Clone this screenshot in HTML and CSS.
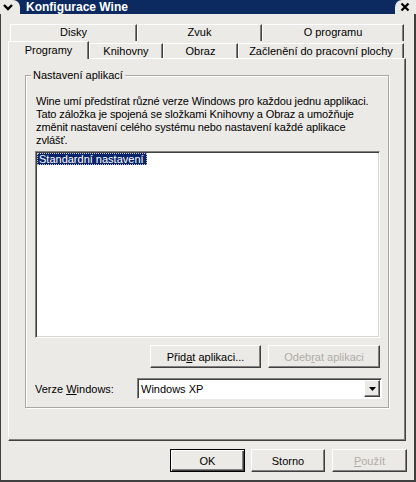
FILE: index.html
```html
<!DOCTYPE html>
<html lang="cs">
<head>
  <meta charset="UTF-8" />
  <title>Konfigurace Wine</title>
  <link rel="stylesheet" href="styles.css">
</head>
<body>

  <div class="titlebar">
    <div class="sysmenu">
      <svg width="12" height="8" viewBox="0 0 12 8"><polyline points="2,2 6,6 10,2" fill="none" stroke="#000" stroke-width="2.4"/></svg>
    </div>
    <div class="title">Konfigurace Wine</div>
    <div class="close">
      <svg width="10" height="10" viewBox="0 0 10 10"><path d="M1.5 1.5 L8.5 8.5 M8.5 1.5 L1.5 8.5" stroke="#000" stroke-width="2.2"/></svg>
    </div>
  </div>

  <div class="frame">
    <div class="tabs">
      <div class="tabrow back">
        <div class="tab w-disky">Disky</div>
        <div class="tab w-zvuk">Zvuk</div>
        <div class="tab w-about">O programu</div>
      </div>
      <div class="tabrow front">
        <div class="tab active w-prog">Programy</div>
        <div class="tab w-lib">Knihovny</div>
        <div class="tab w-img">Obraz</div>
        <div class="tab w-desk">Začlenění do pracovní plochy</div>
      </div>
    </div>

    <div class="panel">
      <div class="group">
        <span class="group-label">Nastavení aplikací</span>
        <p class="desc">Wine umí předstírat různé verze Windows pro každou jednu applikaci.<br>Tato záložka je spojená se složkami Knihovny a Obraz a umožňuje<br>změnit nastavení celého systému nebo nastavení každé aplikace<br>zvlášť.</p>
        <div class="list">
          <div class="item selected">Standardní nastavení</div>
        </div>
        <div class="list-buttons">
          <button class="btn w-add">Přid<u>a</u>t aplikaci...</button>
          <button class="btn w-remove" disabled>Odeb<u>r</u>at aplikaci</button>
        </div>
        <div class="version-row">
          <label class="version-label">Verze <u>W</u>indows:</label>
          <div class="combo">
            <span class="combo-value">Windows XP</span>
            <span class="combo-drop">
              <svg width="7" height="4" viewBox="0 0 7 4"><polygon points="0,0 7,0 3.5,4" fill="#000"/></svg>
            </span>
          </div>
        </div>
      </div>
    </div>

    <div class="dialog-buttons">
      <button class="btn default w-ok">OK</button>
      <button class="btn w-cancel">Storno</button>
      <button class="btn w-apply" disabled><u>P</u>oužít</button>
    </div>
  </div>

</body>
</html>
```

FILE: styles.css
```css
* { margin: 0; padding: 0; box-sizing: border-box; }
body {
  font-family: 'Liberation Sans', Arial, sans-serif;
  font-size: 11px;
  color: #000;
  background: #eceae6;
  width: 416px;
  height: 482px;
  overflow: hidden;
}

/* title bar */
.titlebar {
  height: 14px;
  background: #0c2a60;
  display: flex;
  align-items: center;
}
.sysmenu {
  width: 20px;
  height: 14px;
  background: #eceae6;
  border-top-right-radius: 7px;
  display: flex;
  align-items: center;
  justify-content: center;
  padding-right: 4px;
}
.title {
  flex-grow: 1;
  margin-left: 6px;
  color: #fff;
  font-weight: bold;
  font-size: 12px;
  line-height: 14px;
}
.close {
  width: 21px;
  height: 14px;
  background: #eceae6;
  border-top-left-radius: 7px;
  display: flex;
  align-items: center;
  justify-content: flex-end;
  padding-right: 6px;
}

/* window body */
.frame {
  height: 468px;
  border-left: 1px solid #404040;
  border-right: 2px solid #404040;
  border-bottom: 2px solid #404040;
  padding: 10px 7px 0 7px;
  display: flex;
  flex-direction: column;
}

/* tabs */
.tabrow {
  display: flex;
  height: 17px;
}
.tabrow.back { margin-left: 2px; }
.tab {
  text-align: center;
  line-height: 15px;
  border-top: 1px solid #fff;
  border-left: 1px solid #fff;
  border-right: 1px solid #404040;
  box-shadow: inset -1px 0 #808080;
  white-space: nowrap;
}
.front .tab {
  margin-top: 2px;
  line-height: 14px;
}
.front .tab.active {
  margin-top: 0;
  height: 18px;
  line-height: 16px;
  position: relative;
  z-index: 1;
  background: #eceae6;
}
.w-disky { width: 127px; }
.w-zvuk { width: 125px; }
.w-about { width: 142px; }
.w-prog { width: 81px; }
.w-lib { width: 74px; }
.w-img { width: 75px; }
.w-desk { width: 166px; }

/* tab page */
.panel {
  width: 398px;
  height: 383px;
  border-top: 1px solid #fff;
  border-left: 1px solid #fff;
  border-right: 1px solid #404040;
  border-bottom: 1px solid #404040;
  box-shadow: inset -1px -1px #808080;
  padding: 16px 0 0 16px;
}
.group {
  position: relative;
  width: 364px;
  border: 1px solid #a9a7a2;
  box-shadow: inset 1px 1px #fff, 1px 1px #fff;
  padding: 19px 8px 8px 9px;
}
.group-label {
  position: absolute;
  top: -7px;
  left: 5px;
  padding: 0 2px;
  line-height: 13px;
  background: #eceae6;
}
.desc {
  line-height: 13px;
  padding-left: 1px;
  letter-spacing: -0.12px;
  white-space: nowrap;
}
.list {
  margin-top: 4px;
  height: 187px;
  background: #fff;
  border-top: 1px solid #808080;
  border-left: 1px solid #808080;
  border-right: 1px solid #fff;
  border-bottom: 1px solid #fff;
  box-shadow: inset 1px 1px #404040, inset -1px -1px #d8d6d0;
  padding: 1px 0 0 1px;
}
.item {
  display: inline-block;
  line-height: 12px;
  padding: 0 3px 0 2px;
}
.item.selected {
  background: #0a246a;
  color: #fff;
  outline: 1px dotted #c8c8c8;
  outline-offset: -1px;
}

/* buttons */
.btn {
  height: 23px;
  font-family: inherit;
  font-size: 11px;
  color: #000;
  background: #eceae6;
  border: 1px solid;
  border-color: #fff #404040 #404040 #fff;
  box-shadow: inset -1px -1px #808080;
}
.btn:disabled { color: #aeaca8; }
.btn.default {
  border: 1px solid #000;
  box-shadow: inset 1px 1px #fff, inset -1px -1px #404040, inset -2px -2px #808080;
}
.list-buttons {
  display: flex;
  justify-content: flex-end;
  gap: 7px;
  margin-top: 7px;
}
.w-add { width: 111px; }
.w-remove { width: 112px; }

.version-row {
  display: flex;
  align-items: center;
  margin-top: 10px;
  height: 21px;
}
.version-label { width: 102px; }
.combo {
  width: 245px;
  height: 21px;
  margin-right: -2px;
  background: #fff;
  border-top: 1px solid #808080;
  border-left: 1px solid #808080;
  border-right: 1px solid #fff;
  border-bottom: 1px solid #fff;
  box-shadow: inset 1px 1px #404040;
  display: flex;
  align-items: center;
  justify-content: space-between;
  padding: 1px 1px 1px 3px;
}
.combo-drop {
  width: 16px;
  height: 17px;
  background: #eceae6;
  border: 1px solid;
  border-color: #fff #404040 #404040 #fff;
  box-shadow: inset -1px -1px #808080;
  display: flex;
  align-items: center;
  justify-content: center;
}

.dialog-buttons {
  display: flex;
  justify-content: flex-end;
  margin-top: 8px;
}
.w-ok { width: 75px; }
.w-cancel { width: 74px; margin-left: 6px; }
.w-apply { width: 75px; margin-left: 7px; }
```
